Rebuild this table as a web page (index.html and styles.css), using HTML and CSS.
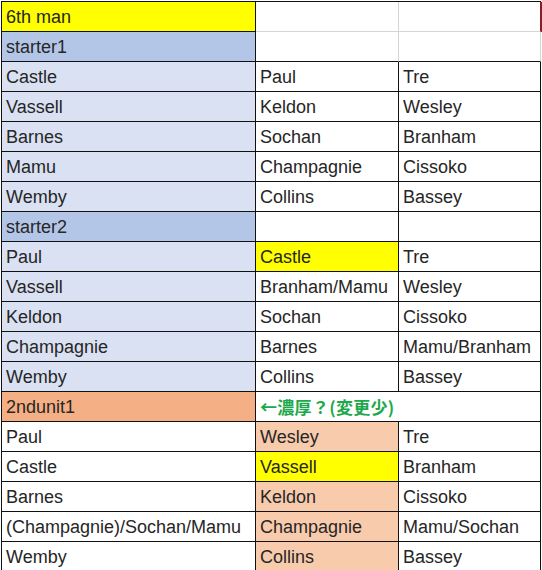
FILE: index.html
```html
<!DOCTYPE html>
<html lang="ja">
<head>
<meta charset="utf-8">
<title>Rotation sheet</title>
<link rel="stylesheet" href="styles.css">
</head>
<body>
<div class="sheet">
  <div class="c yellow">6th man</div><div class="c plain soft"></div><div class="c plain soft edge"></div>
  <div class="c hdr">starter1</div><div class="c plain soft top-grey"></div><div class="c plain soft top-grey"></div>

  <div class="c lb">Castle</div><div class="c">Paul</div><div class="c">Tre</div>
  <div class="c lb">Vassell</div><div class="c">Keldon</div><div class="c">Wesley</div>
  <div class="c lb">Barnes</div><div class="c">Sochan</div><div class="c">Branham</div>
  <div class="c lb">Mamu</div><div class="c">Champagnie</div><div class="c">Cissoko</div>
  <div class="c lb">Wemby</div><div class="c">Collins</div><div class="c">Bassey</div>

  <div class="c hdr">starter2</div><div class="c"></div><div class="c"></div>
  <div class="c lb">Paul</div><div class="c yellow">Castle</div><div class="c">Tre</div>
  <div class="c lb">Vassell</div><div class="c">Branham/Mamu</div><div class="c">Wesley</div>
  <div class="c lb">Keldon</div><div class="c">Sochan</div><div class="c">Cissoko</div>
  <div class="c lb">Champagnie</div><div class="c">Barnes</div><div class="c">Mamu/Branham</div>
  <div class="c lb">Wemby</div><div class="c">Collins</div><div class="c">Bassey</div>

  <div class="c orange">2ndunit1</div><div class="c note">←濃厚？(変更少)</div>
  <div class="c">Paul</div><div class="c peach">Wesley</div><div class="c">Tre</div>
  <div class="c">Castle</div><div class="c yellow">Vassell</div><div class="c">Branham</div>
  <div class="c">Barnes</div><div class="c peach">Keldon</div><div class="c">Cissoko</div>
  <div class="c">(Champagnie)/Sochan/Mamu</div><div class="c peach">Champagnie</div><div class="c">Mamu/Sochan</div>
  <div class="c">Wemby</div><div class="c peach">Collins</div><div class="c">Bassey</div>
</div>
</body>
</html>
```
FILE: styles.css
```css
html, body {
  margin: 0;
  padding: 0;
  background: #ffffff;
}

.sheet {
  margin: 1px 0 0 1px;
  width: 539px;
  display: grid;
  grid-template-columns: 254px 143px 142px;
  grid-auto-rows: 30px;
  border-top: 1px solid #111;
  border-left: 1px solid #111;
  font-family: "Liberation Sans", Arial, sans-serif;
  font-size: 18px;
  color: #262626;
}

.c {
  box-sizing: border-box;
  border-right: 1px solid #111;
  border-bottom: 1px solid #111;
  padding: 1px 0 0 4px;
  line-height: 28px;
  white-space: nowrap;
  overflow: visible;
  background: #ffffff;
}

.soft {
  border-right-color: #d4d4d4;
  border-bottom-color: #d4d4d4;
}

.top-grey {
  border-bottom-color: #111;
}

.edge {
  border-right-color: #8b1c24;
  box-shadow: 1px 0 0 #8b1c24;
}

.yellow { background: #ffff00; }
.hdr { background: #b4c6e7; }
.lb { background: #d9e1f2; }
.orange { background: #f4b084; }
.peach { background: #f8cbad; }

.note {
  grid-column: span 2;
  font-family: "Noto Sans CJK JP", "Noto Sans CJK SC", sans-serif;
  font-weight: 700;
  font-size: 17px;
  letter-spacing: 0.3px;
  color: #1ea84c;
}
```
